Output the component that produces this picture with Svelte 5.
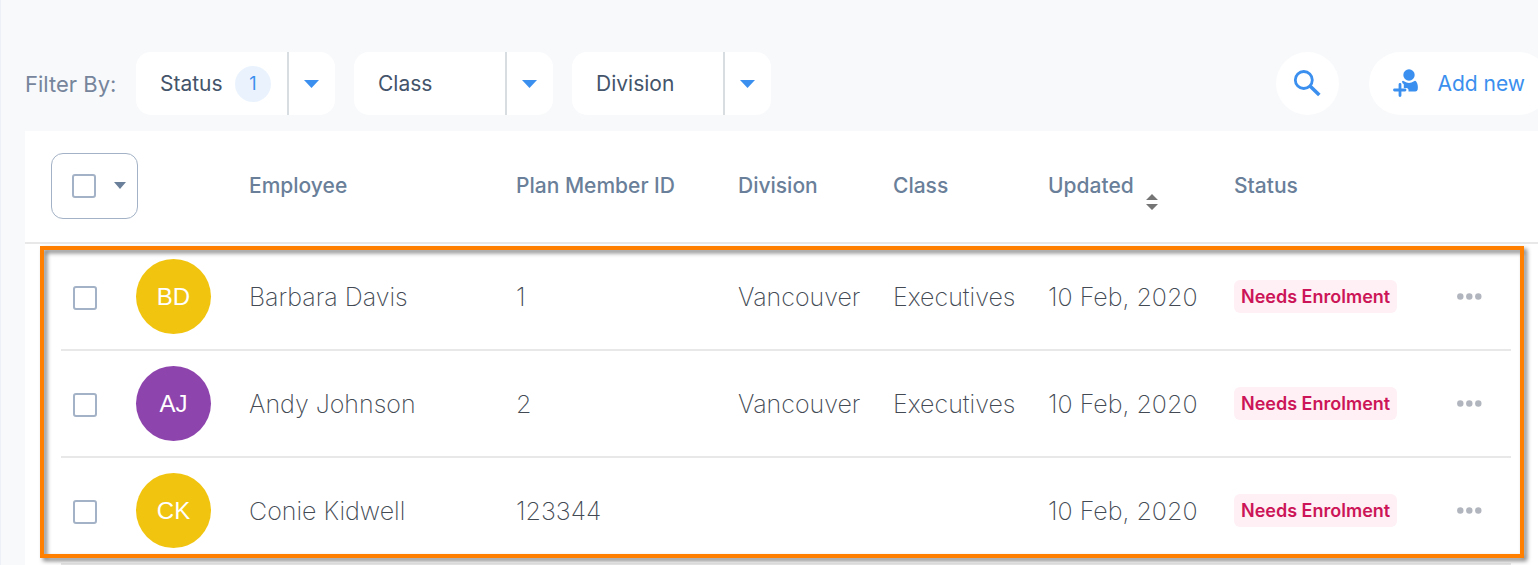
<script>
  const filters = [
    { label: 'Status', count: 1 },
    { label: 'Class', count: 0 },
    { label: 'Division', count: 0 }
  ];

  const employees = [
    { name: 'Barbara Davis', initials: 'BD', tone: 'yellow', member: '1', division: 'Vancouver', group: 'Executives', updated: '10 Feb, 2020', status: 'Needs Enrolment' },
    { name: 'Andy Johnson', initials: 'AJ', tone: 'purple', member: '2', division: 'Vancouver', group: 'Executives', updated: '10 Feb, 2020', status: 'Needs Enrolment' },
    { name: 'Conie Kidwell', initials: 'CK', tone: 'yellow', member: '123344', division: '', group: '', updated: '10 Feb, 2020', status: 'Needs Enrolment' }
  ];

  let selected = $state([false, false, false]);
  let allSelected = $derived(selected.every(Boolean));

  function toggleAll(event) {
    const value = event.currentTarget.checked;
    selected = selected.map(() => value);
  }
</script>

<main class="page">
  <div class="toolbar">
    <span class="toolbar-label">Filter By:</span>
    {#each filters as filter}
      <div class="filter">
        <button class="filter-main" type="button">
          {filter.label}
          {#if filter.count}<span class="count">{filter.count}</span>{/if}
        </button>
        <button class="filter-toggle" type="button" aria-label="Open {filter.label} filter">
          <svg width="15" height="8" viewBox="0 0 15 8"><path d="M0 0h15L7.500 8z" fill="currentColor" /></svg>
        </button>
      </div>
    {/each}
    <div class="actions">
      <button class="search" type="button" aria-label="Search">
        <svg width="32" height="32" viewBox="0 0 32 32" fill="none" stroke="currentColor" stroke-width="2.800">
          <circle cx="11.800" cy="12" r="8.500" />
          <path d="M18 18l9.300 9" stroke-width="3.600" />
        </svg>
      </button>
      <button class="add" type="button">
        <svg width="26" height="30" viewBox="0 0 26 30">
          <circle cx="16" cy="6" r="5.700" fill="currentColor" />
          <path d="M9 12.200q1-.8 2 0 5 3.600 10 0 1-.8 2 0c1.700 2 2.200 5 1.700 8.300q-.4 2-2.400 2H15.500v-1.700q-.3-1.700-2-1.700h-2.700V15.500q-.2-1-1.300-1.200z" fill="currentColor" />
          <path d="M7 15.500v11M1.500 21h10.500" stroke="currentColor" stroke-width="2.800" stroke-linecap="round" />
        </svg>
        Add new
      </button>
    </div>
  </div>

  <table class="table">
    <thead>
      <tr>
        <th class="select-cell">
          <div class="select-all">
            <input type="checkbox" aria-label="Select all employees" checked={allSelected} onchange={toggleAll} />
            <button type="button" aria-label="Selection options">
              <svg width="12" height="7" viewBox="0 0 12 7"><path d="M0 0h12L6 7z" fill="currentColor" /></svg>
            </button>
          </div>
        </th>
        <th aria-label="Avatar"></th>
        <th>Employee</th>
        <th>Plan Member ID</th>
        <th>Division</th>
        <th>Class</th>
        <th>
          <button class="sort" type="button">
            Updated
            <svg width="12" height="16" viewBox="0 0 12 16" fill="#757575"><path d="M0 6h12L6 0zM0 10h12L6 16z" /></svg>
          </button>
        </th>
        <th>Status</th>
        <th aria-label="Actions"></th>
      </tr>
    </thead>
    <tbody>
      {#each employees as person, i}
        <tr>
          <td class="check"><input type="checkbox" aria-label="Select {person.name}" bind:checked={selected[i]} /></td>
          <td><span class="avatar {person.tone}">{person.initials}</span></td>
          <td>{person.name}</td>
          <td>{person.member}</td>
          <td>{person.division}</td>
          <td>{person.group}</td>
          <td>{person.updated}</td>
          <td><span class="status">{person.status}</span></td>
          <td>
            <button class="more" type="button" aria-label="More actions for {person.name}">
              <svg width="25" height="7" viewBox="0 0 25 7" fill="currentColor"><circle cx="3.300" cy="3.500" r="3.200" /><circle cx="12.300" cy="3.500" r="3.200" /><circle cx="21.300" cy="3.500" r="3.200" /></svg>
            </button>
          </td>
        </tr>
      {/each}
    </tbody>
  </table>
</main>

<style>
  :global(body) {
    margin: 0;
    background: #f8f9fb;
  }

  .page {
    box-sizing: border-box;
    padding: 52px 0 0 24px;
    border-left: 1px solid #eef0f8;
    overflow: hidden;
    font-family: Inter, sans-serif;
    font-size: 21px;
    color: #44546a;
  }

  button {
    margin: 0;
    padding: 0;
    border: 0;
    background: none;
    color: inherit;
    font: inherit;
    cursor: pointer;
  }

  svg {
    display: block;
    flex: none;
  }

  .toolbar {
    display: flex;
    align-items: center;
    gap: 19px;
    margin: 0 -12px 16px 0;
  }

  .toolbar-label {
    width: 92px;
    color: #76859b;
    font-size: 22px;
    white-space: nowrap;
  }

  .filter {
    display: flex;
    height: 63px;
    border-radius: 15px;
    background: #fff;
  }

  .filter-main {
    display: flex;
    align-items: center;
    justify-content: space-between;
    min-width: 151px;
    padding: 0 16px 0 24px;
  }

  .count {
    display: grid;
    place-items: center;
    width: 36px;
    height: 36px;
    border-radius: 50%;
    background: #eaf3fd;
    color: #3b8fee;
    font-size: 18px;
  }

  .filter-toggle {
    display: grid;
    place-items: center;
    width: 48px;
    padding-right: 2px;
    border-left: 2px solid #d8dde2;
    color: #3b8fee;
  }

  .actions {
    display: flex;
    gap: 30px;
    margin-left: auto;
    color: #3b8fee;
  }

  .search {
    display: grid;
    place-items: center;
    width: 63px;
    height: 63px;
    border-radius: 50%;
    background: #fff;
  }

  .add {
    display: flex;
    align-items: center;
    gap: 18px;
    height: 63px;
    padding: 0 25px 0 24px;
    border-radius: 32px;
    background: #fff;
    white-space: nowrap;
  }

  .table {
    display: block;
    background: #fff;
  }

  thead,
  tbody {
    display: block;
  }

  thead {
    padding: 0 27px 2px 36px;
    border-bottom: 2px solid #e8e8e8;
  }

  tbody {
    position: relative;
    margin: 0 27px 0 36px;
  }

  tbody::after {
    content: '';
    position: absolute;
    inset: 2px -13px 7px -21px;
    border: 4px solid #ff8000;
    filter: drop-shadow(3px 3px 2px rgba(0, 0, 0, 0.5));
    pointer-events: none;
  }

  tr {
    display: grid;
    grid-template-columns: 75px 113px 267fr 222fr 155fr 155fr 186fr 223fr 54px;
    align-items: center;
  }

  thead tr {
    height: 109px;
  }

  tbody tr {
    height: 105px;
    border-bottom: 2px solid #e8e8e8;
  }

  th,
  td {
    padding: 0;
    text-align: left;
    white-space: nowrap;
  }

  th {
    color: #6a7f99;
    font-weight: 500;
  }

  td {
    color: #434a54;
    font-size: 25px;
    font-weight: 200;
  }

  .select-cell {
    margin-left: -10px;
  }

  .select-all {
    box-sizing: border-box;
    display: flex;
    align-items: center;
    gap: 18px;
    width: 87px;
    height: 66px;
    padding: 0 10px 0 20px;
    border: 1px solid #a3b2c6;
    border-radius: 12px;
  }

  input {
    appearance: none;
    display: block;
    flex: none;
    box-sizing: border-box;
    width: 24px;
    height: 24px;
    margin: 0;
    border: 2px solid #a3b2c6;
    border-radius: 3px;
    background: #fff;
  }

  input:checked {
    background: #3b8fee;
  }

  .check {
    padding: 2px 0 0 12px;
  }

  .sort {
    display: flex;
    gap: 12px;
    align-items: center;
  }

  .sort svg {
    align-self: flex-end;
    margin-bottom: -12px;
  }

  .avatar {
    display: grid;
    place-items: center;
    width: 75px;
    height: 75px;
    border-radius: 50%;
    color: #fff;
    font-family: 'Liberation Sans', sans-serif;
    font-size: 24px;
    font-weight: 400;
  }

  .yellow {
    background: #f1c40f;
  }

  .purple {
    background: #8e44ad;
  }

  .status {
    display: inline-block;
    padding: 0 7px;
    border-radius: 6px;
    background: #fff0f5;
    color: #cc1558;
    font-size: 18px;
    font-weight: 600;
    line-height: 33px;
    vertical-align: middle;
  }

  .more {
    display: block;
    color: #b1b5bd;
  }
</style>
